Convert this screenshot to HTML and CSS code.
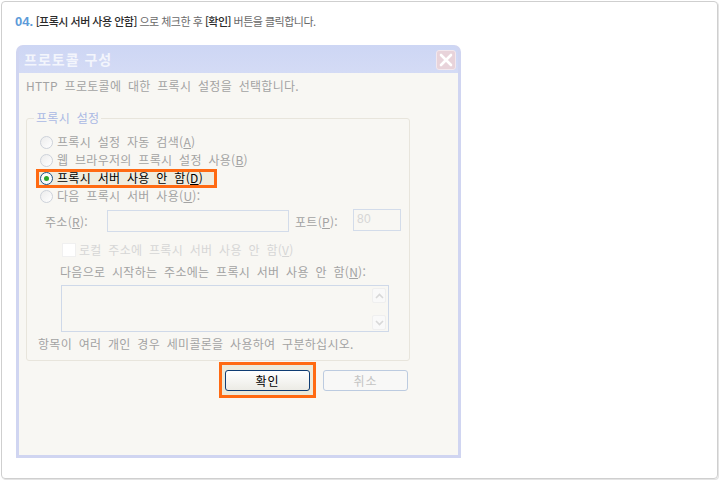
FILE: index.html
```html
<!DOCTYPE html>
<html lang="ko">
<head>
    <meta charset="UTF-8">
    <title>프록시 설정 안내</title>
    <link rel="stylesheet" href="styles.css">
</head>
<body>
    <div class="panel">
        <p class="step"><span class="step-no">04.</span> <b>[프록시 서버 사용 안함]</b> 으로 체크한 후 <b>[확인]</b> 버튼을 클릭합니다.</p>

        <!-- dialog capture -->
        <div class="window">
            <div class="titlebar">
                <span class="title">프로토콜 구성</span>
                <span class="close-btn">
                    <svg width="14" height="14" viewBox="0 0 14 14"><path d="M2 2 L12 12 M12 2 L2 12" stroke="#fff" stroke-width="2.6" stroke-linecap="round"/></svg>
                </span>
            </div>
            <div class="win-body">
                <p class="desc">HTTP 프로토콜에 대한 프록시 설정을 선택합니다.</p>

                <fieldset class="group">
                    <legend>프록시 설정</legend>
                    <div class="row"><span class="radio"></span>프록시 설정 자동 검색(<u>A</u>)</div>
                    <div class="row"><span class="radio"></span>웹 브라우저의 프록시 설정 사용(<u>B</u>)</div>
                    <div class="row"><span class="row-focus"><span class="radio checked"></span>프록시 서버 사용 안 함(<u>D</u>)</span></div>
                    <div class="row"><span class="radio"></span>다음 프록시 서버 사용(<u>U</u>):</div>

                    <div class="addr-row">
                        <span class="addr-label">주소(<u>R</u>):</span>
                        <span class="input addr-input"></span>
                        <span class="port-label">포트(<u>P</u>):</span>
                        <span class="input port-input">80</span>
                    </div>

                    <div class="row check-row"><span class="checkbox"></span>로컬 주소에 프록시 서버 사용 안 함(<u>V</u>)</div>
                    <div class="row except-label">다음으로 시작하는 주소에는 프록시 서버 사용 안 함(<u>N</u>):</div>
                    <div class="textbox">
                        <div class="scroll">
                            <span class="arrow"><svg width="9" height="6" viewBox="0 0 9 6"><path d="M1 5 L4.5 1.5 L8 5" fill="none" stroke="#d8d8d8" stroke-width="1.6"/></svg></span>
                            <span class="arrow"><svg width="9" height="6" viewBox="0 0 9 6"><path d="M1 1 L4.5 4.5 L8 1" fill="none" stroke="#d8d8d8" stroke-width="1.6"/></svg></span>
                        </div>
                    </div>
                    <div class="row hint">항목이 여러 개인 경우 세미콜론을 사용하여 구분하십시오.</div>
                </fieldset>

                <div class="buttons">
                    <span class="btn-focus"><span class="btn btn-ok">확인</span></span>
                    <span class="btn btn-off">취소</span>
                </div>
            </div>
        </div>
    </div>
</body>
</html>
```

FILE: styles.css
```css
body {
    margin: 0;
    background: #fff;
    font-family: "Noto Sans CJK KR", "Liberation Sans", sans-serif;
}
.panel {
    margin: 1px;
    width: 717px;
    height: 478px;
    box-sizing: border-box;
    border: 1px solid #cfcfcf;
    border-radius: 4px;
    box-shadow: 1px 1px 0 #e4e4e4;
    padding: 10px 13px;
}
.step {
    margin: 0 0 15px 0;
    height: 18px;
    line-height: 18px;
    font-size: 11px;
    letter-spacing: -0.5px;
    color: #6a6a6a;
}
.step b {
    color: #2a2a2a;
    font-weight: 500;
}
.step-no {
    font-family: "Liberation Sans", sans-serif;
    font-size: 13px;
    font-weight: bold;
    letter-spacing: 0;
    color: #5b9bd9;
}

/* window */
.window {
    margin-left: 1px;
    width: 445px;
    height: 413px;
    box-sizing: border-box;
    background: #d0d5f1;
    border-radius: 7px 7px 0 0;
    padding: 0 3px 3px 3px;
    display: flex;
    flex-direction: column;
}
.titlebar {
    height: 28px;
    display: flex;
    align-items: center;
    justify-content: space-between;
    padding: 0 2px 0 5px;
    background: linear-gradient(#cdd6f4, #d4dbf5);
    border-radius: 7px 7px 0 0;
}
.title {
    color: #f3f5fc;
    font-size: 14px;
    font-weight: bold;
    letter-spacing: 1px;
}
.close-btn {
    width: 20px;
    height: 20px;
    box-sizing: border-box;
    border: 1px solid #f2e8ee;
    border-radius: 3px;
    background: #e8d3da;
    display: flex;
    align-items: center;
    justify-content: center;
    margin-top: 2px;
}
.win-body {
    flex: 1;
    background: #f8f7f3;
    padding: 6px 7px 0 7px;
    font-size: 12px;
    letter-spacing: 0.3px;
    word-spacing: 3px;
    color: #a3a3a3;
}
.desc {
    margin: 0;
    line-height: 14px;
}

/* group */
.group {
    margin: 18px 0 0 0;
    width: 384px;
    box-sizing: border-box;
    border: 1px solid #e8e5dc;
    border-radius: 3px;
    padding: 8px 6px 7px 13px;
}
.group legend {
    margin-left: -6px;
    padding: 0 2px;
    line-height: 14px;
    color: #aab9e4;
}
.row {
    height: 18px;
    line-height: 18px;
    display: flex;
    align-items: center;
    white-space: nowrap;
}
.radio {
    width: 13px;
    height: 13px;
    box-sizing: border-box;
    border: 1px solid #cdd2da;
    border-radius: 50%;
    background: linear-gradient(135deg, #ececec, #fff);
    margin-right: 4px;
    display: flex;
    align-items: center;
    justify-content: center;
}
.radio.checked {
    border-color: #1d5281;
    background: #fafafa;
}
.radio.checked::after {
    content: "";
    width: 5px;
    height: 5px;
    border-radius: 50%;
    background: #2ca52c;
}
.row-focus {
    display: flex;
    align-items: center;
    height: 19px;
    box-sizing: border-box;
    margin-left: -4px;
    padding: 0 11px 0 1px;
    border: 3px solid #ff6a12;
    background: #efecdf;
    color: #000;
}
.addr-row {
    margin-top: 5px;
    height: 22px;
    display: flex;
    align-items: center;
    padding-left: 5px;
}
.addr-label {
    width: 62px;
}
.port-label {
    margin-left: 6px;
    width: 58px;
}
.input {
    height: 22px;
    box-sizing: border-box;
    border: 1px solid #d3dcea;
    background: #f8f7f3;
}
.addr-input {
    width: 182px;
}
.port-input {
    width: 48px;
    margin-top: -2px;
    padding: 2px 0 0 3px;
    line-height: 14px;
    color: #d6d6d6;
    font-family: "Liberation Sans", sans-serif;
}
.check-row {
    margin-top: 9px;
    padding-left: 22px;
    color: #d6d6d6;
}
.checkbox {
    width: 12px;
    height: 12px;
    background: #fff;
    border: 1px solid #f0f0f0;
    margin-right: 3px;
}
.except-label {
    margin-top: 4px;
    padding-left: 20px;
}
.textbox {
    margin: 4px 0 0 21px;
    width: 328px;
    height: 47px;
    box-sizing: border-box;
    border: 1px solid #cfd9e9;
    display: flex;
    justify-content: flex-end;
    padding: 2px 2px 1px 0;
}
.scroll {
    width: 14px;
    display: flex;
    flex-direction: column;
    justify-content: space-between;
}
.arrow {
    height: 15px;
    box-sizing: border-box;
    border: 1px solid #efefef;
    border-radius: 2px;
    background: #f9f9f9;
    display: flex;
    align-items: center;
    justify-content: center;
}
.hint {
    margin-top: 3px;
    margin-left: -2px;
}

/* buttons */
.buttons {
    margin-top: 1px;
    padding-left: 193px;
    display: flex;
    align-items: flex-start;
}
.btn-focus {
    border: 3px solid #ff6a12;
    background: #ece9d9;
    padding: 5px 3px 4px 3px;
}
.btn {
    width: 85px;
    height: 21px;
    box-sizing: border-box;
    border-radius: 3px;
    display: flex;
    align-items: center;
    justify-content: center;
    font-size: 12px;
    letter-spacing: 1px;
}
.btn-ok {
    border: 1px solid #0f3c73;
    background: linear-gradient(#ffffff, #ecebe5);
    color: #000;
}
.btn-off {
    margin: 8px 0 0 7px;
    border: 1px solid #bccbe0;
    background: #f8f8f7;
    color: #c4c4c4;
}
```
